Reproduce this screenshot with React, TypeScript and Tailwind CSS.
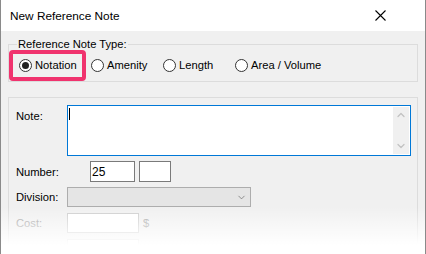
import { ChevronDown, ChevronUp } from "lucide-react";

const radios = ["Notation", "Amenity", "Length", "Area / Volume"];

function Radio({ label, checked }: { label: string; checked?: boolean }) {
  return (
    <div className="flex w-[72px] shrink-0 items-center gap-[3px] whitespace-nowrap last:w-auto">
      <span className="flex size-[13px] shrink-0 items-center justify-center rounded-full border border-[#333] bg-white">
        {checked && <span className="size-[7px] rounded-full bg-[#222]" />}
      </span>
      <span>{label}</span>
    </div>
  );
}

export default function App() {
  return (
    <div
      className="relative h-[254px] w-[426px] overflow-hidden border-x border-[#8a8a8a] bg-[#f0f0f0] text-[11.2px] leading-[14px] text-black"
      style={{ fontFamily: '"Liberation Sans", Arial, sans-serif' }}
    >
      {/* title bar */}
      <div className="flex h-[31px] items-center justify-between bg-white pl-[9px] pr-[39px]">
        <span className="text-[11.8px]">New Reference Note</span>
        <svg width="11" height="11" viewBox="0 0 11 11" className="text-black">
          <path d="M0.5 0.5 L10.5 10.5 M10.5 0.5 L0.5 10.5" stroke="currentColor" strokeWidth="1.1" />
        </svg>
      </div>

      <div className="px-[7px]">
        <fieldset className="mt-[6px] h-[45px] w-[410px] border border-[#dcdcdc]">
          <legend className="ml-[8px] px-[1px] leading-[14px]">Reference Note Type:</legend>
          <div className="-mt-px flex h-[30px] items-center pl-[10px]">
            {radios.map((r, i) => (
              <Radio key={r} label={r} checked={i === 0} />
            ))}
          </div>
        </fieldset>

        <div className="mt-[15px] h-[200px] w-[410px] border border-[#dcdcdc] pl-[7px]">
          <div className="mt-[7px] flex">
            <span className="w-[51px] pt-[4px]">Note:</span>
            <div className="relative flex h-[51px] w-[344px] border border-[#0078d7] bg-white">
              <span className="ml-[1px] mt-[2px] h-[12px] w-px bg-black" />
              <div className="ml-auto mr-px mt-px flex h-[47px] w-[16px] flex-col items-center justify-between bg-[#f0f0f0] py-[2px] text-[#c2c2c2]">
                <ChevronUp size={12} strokeWidth={2.5} />
                <ChevronDown size={12} strokeWidth={2.5} />
              </div>
            </div>
          </div>

          <div className="mt-[5px] flex items-center">
            <span className="w-[74px]">Number:</span>
            <div className="flex h-[21px] w-[45px] items-center border border-[#7a7a7a] bg-white pl-[1px] text-[12px]">25</div>
            <div className="ml-[4px] h-[21px] w-[32px] border border-[#7a7a7a] bg-white" />
          </div>

          <div className="mt-[5px] flex items-center">
            <span className="w-[51px]">Division:</span>
            <div className="flex h-[20px] w-[184px] items-center justify-end border border-[#adadad] bg-[#e5e5e5] pr-[3px] text-[#666]">
              <ChevronDown size={11} strokeWidth={1.5} />
            </div>
          </div>

          <div className="mt-[6px] flex items-center text-[#a0a0a0]">
            <span className="w-[51px]">Cost:</span>
            <div className="h-[20px] w-[72px] border border-[#cccccc] bg-white" />
            <span className="ml-[4px]">$</span>
          </div>

          <div className="mt-[6px] flex items-center">
            <span className="w-[51px]" />
            <div className="h-[20px] w-[72px] border border-[#cfcfcf] bg-white" />
          </div>
        </div>
      </div>

      {/* highlight around selected option */}
      <div className="pointer-events-none absolute left-[8px] top-[50px] h-[31px] w-[77px] rounded-[4px] border-[4px] border-[#f0336e]" />

      {/* fade out */}
      <div className="pointer-events-none absolute inset-x-[-1px] bottom-[9px] h-[38px] bg-gradient-to-b from-white/0 to-white" />
      <div className="absolute inset-x-[-1px] bottom-0 h-[9px] bg-white" />
    </div>
  );
}
